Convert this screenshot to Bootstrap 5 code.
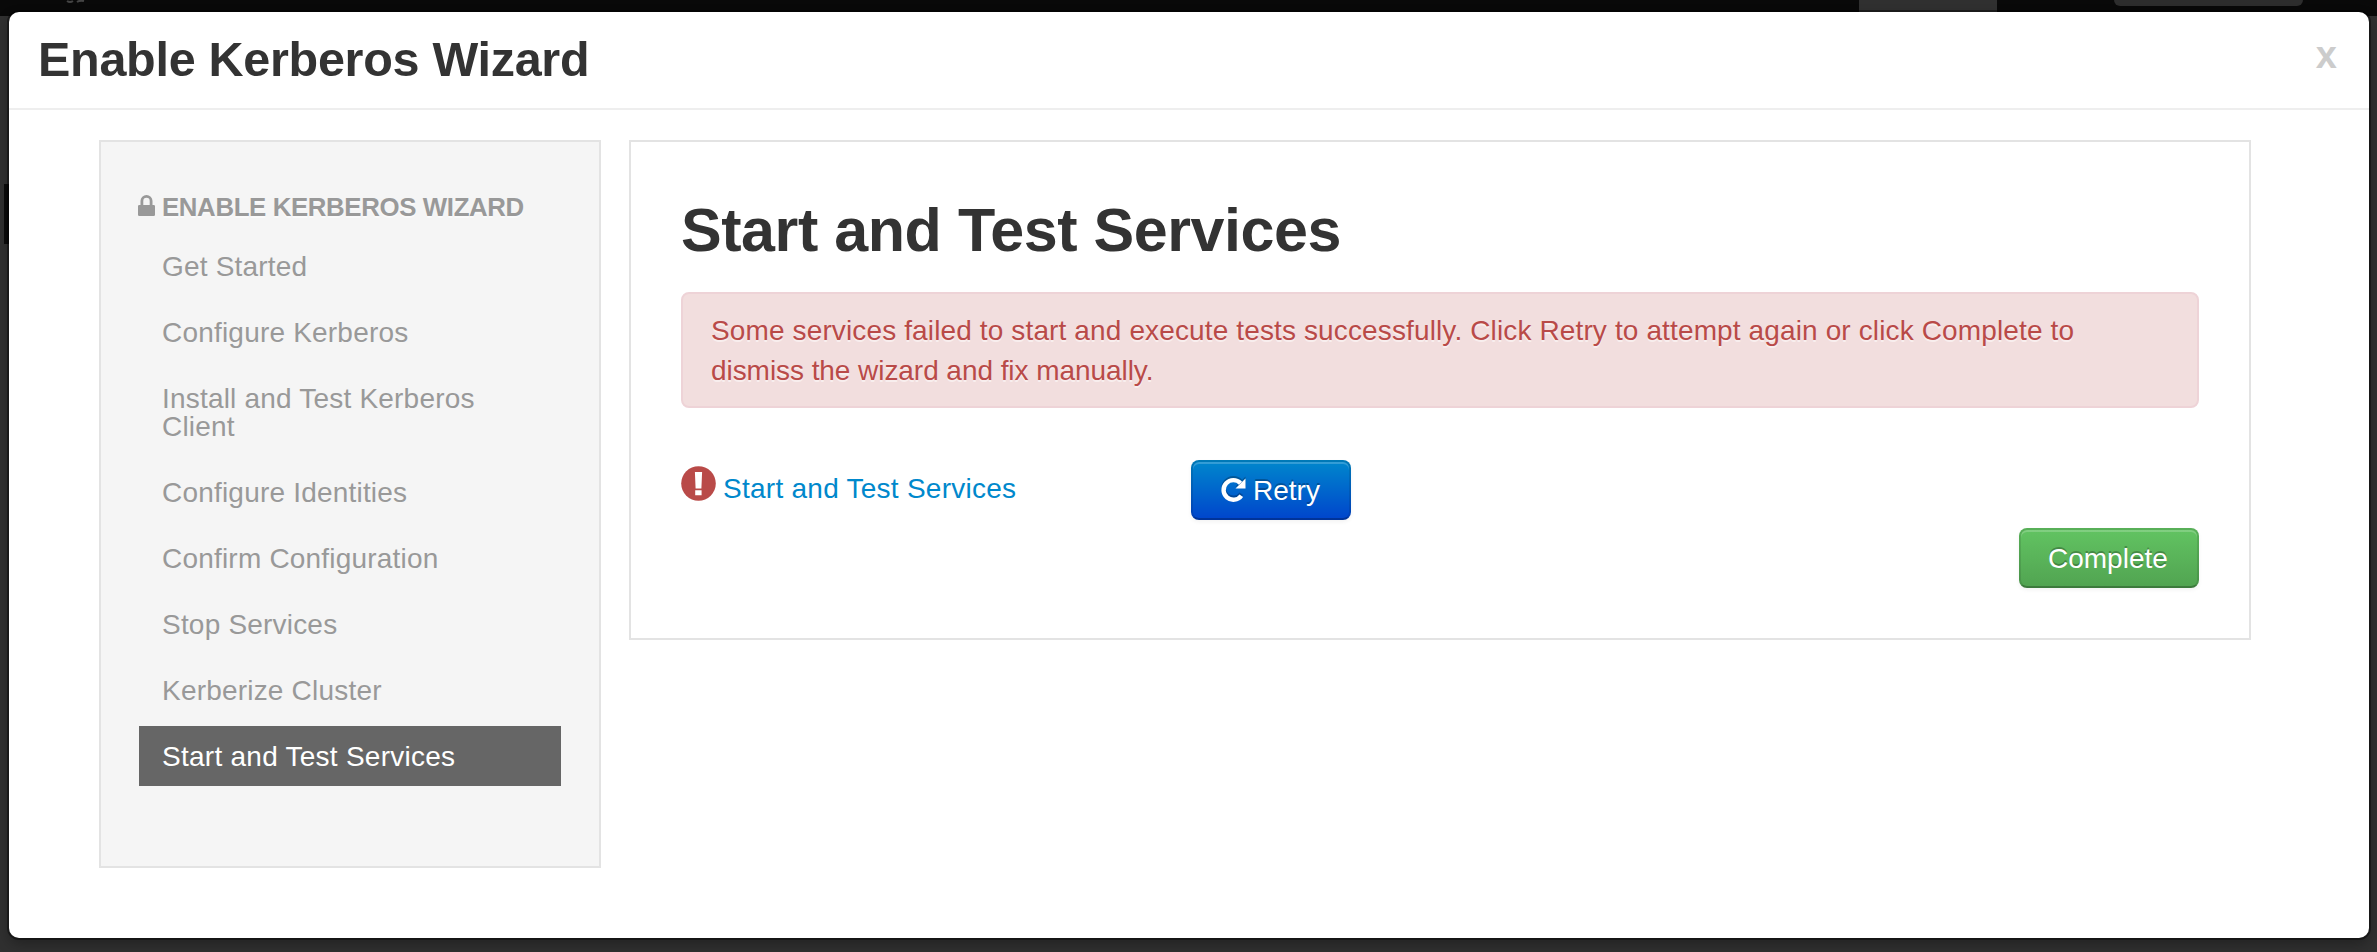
<!DOCTYPE html>
<html lang="en">
<head>
<meta charset="utf-8">
<title>Enable Kerberos Wizard</title>
<link rel="stylesheet" href="https://cdn.jsdelivr.net/npm/bootstrap@5.3.0/dist/css/bootstrap.min.css">
<style>
html,body{height:100%;overflow:hidden}
body{background:#303030;font-family:"Liberation Sans",Arial,sans-serif;font-size:28px;line-height:40px;color:#333}
.topbar{position:absolute;top:0;left:0;right:0;height:16px;background:#090909}
.top-tab{position:absolute;left:1859px;top:0;width:138px;height:12px;background:#303030}
.top-btn{position:absolute;left:2114px;top:0;width:189px;height:6px;background:#2d2d2d;border-radius:0 0 8px 8px}
.top-mark{position:absolute;left:66px;top:0}
.side-mark{position:absolute;left:4px;top:184px;width:8px;height:60px;background:#0b0b0b}
.wizard{position:relative;margin:12px 8px 14px 9px;height:926px;background:#fff;border-radius:10px;box-shadow:0 0 0 2px rgba(0,0,0,.4),0 6px 14px rgba(0,0,0,.3)}
.wizard-head{height:98px;border-bottom:2px solid #eee;padding:17px 32px 0 29px}
.wizard-head h3{font-size:48.500px;line-height:60px;font-weight:700;letter-spacing:-.28px;margin:0;color:#333}
.close-x{font-size:38px;line-height:40px;font-weight:700;color:#ccc;margin-top:6px}
.wizard-body{padding:30px 118px 0 90px;gap:28px}
.steps{width:502px;height:728px;background:#f5f5f5;border:2px solid #e3e3e3;padding:44px 38px;flex:none}
.steps-title{font-size:25.800px;line-height:42px;font-weight:700;letter-spacing:-.36px;color:#999;text-shadow:0 2px 0 rgba(255,255,255,.5);height:50px;white-space:nowrap;gap:6px;margin-left:-1px}
.steps .nav-link{font-size:28px;line-height:28px;letter-spacing:.2px;color:#999;padding:17px 24px 15px 23px;margin-bottom:6px;border-radius:0}
.steps .nav-link.active{background:#666;color:#fff;letter-spacing:.26px}
.panel{height:500px;border:2px solid #e3e3e3;padding:48px 50px 0;min-width:0}
.panel h1{font-size:61px;line-height:80px;font-weight:700;letter-spacing:-.44px;margin:0 0 22px;color:#333}
.fail{height:116px;background:#f2dede;border:2px solid #eed3d7;border-radius:8px;color:#b94a48;padding:17px 28px 15px;margin:0;letter-spacing:.13px;text-shadow:0 2px 0 rgba(255,255,255,.5)}
.fail-end{letter-spacing:-.06px}
.task{margin-top:52px;height:60px}
.task-name{width:510px;color:#08c;letter-spacing:.26px}
.task-text{padding:9px 0 0 7px}
.btn.act{height:60px;padding:9px 27px 7px;font-size:28px;line-height:40px;color:#fff;border:2px solid;border-radius:8px;text-shadow:0 -2px 0 rgba(0,0,0,.25);box-shadow:inset 0 2px 0 rgba(255,255,255,.2),0 2px 4px rgba(0,0,0,.05)}
.retry{width:160px;gap:6px;background:linear-gradient(#08c,#04c) border-box!important;border-color:rgba(0,0,0,.1) rgba(0,0,0,.1) rgba(0,0,0,.25)!important}
.retry svg{margin:-1px 0 0 1px;filter:drop-shadow(0 -2px 0 rgba(0,0,0,.25))}
.done{width:180px;text-align:left!important;background:linear-gradient(#62c462,#51a351) border-box!important;border-color:rgba(0,0,0,.1) rgba(0,0,0,.1) rgba(0,0,0,.25)!important}
</style>
</head>
<body>
<div class="topbar">
  <div class="top-tab"></div><div class="top-btn"></div>
  <svg class="top-mark" width="20" height="4"><path d="M1 1q3 2 6 0M11 2q3-2 7-1" stroke="#444" stroke-width="2" fill="none"/></svg>
</div>
<div class="side-mark"></div>
<div class="overflow-hidden h-100">
<main class="wizard">
  <header class="wizard-head d-flex justify-content-between align-items-start">
    <h3>Enable Kerberos Wizard</h3>
    <span class="close-x" role="button">x</span>
  </header>
  <div class="wizard-body d-flex align-items-start">
    <aside class="steps">
      <div class="steps-title d-flex">
        <svg width="18" height="40" viewBox="0 0 18 40"><path d="M1.200 19H2.500v-4a6 6 0 0 1 12 0v4h1.300a1.200 1.200 0 0 1 1.200 1.200v8.600a1.200 1.200 0 0 1-1.200 1.200H1.200A1.200 1.200 0 0 1 0 28.800v-8.600A1.200 1.200 0 0 1 1.200 19M5.300 19h6.400v-4a3.200 3.200 0 0 0-6.400 0z" fill="#999" fill-rule="evenodd"/></svg>
        <span>ENABLE KERBEROS WIZARD</span>
      </div>
      <nav class="nav flex-column">
        <a class="nav-link">Get Started</a>
        <a class="nav-link">Configure Kerberos</a>
        <a class="nav-link">Install and Test Kerberos Client</a>
        <a class="nav-link">Configure Identities</a>
        <a class="nav-link">Confirm Configuration</a>
        <a class="nav-link">Stop Services</a>
        <a class="nav-link">Kerberize Cluster</a>
        <a class="nav-link active">Start and Test Services</a>
      </nav>
    </aside>
    <section class="panel flex-grow-1">
      <h1>Start and Test Services</h1>
      <div class="alert fail">Some services failed to start and execute tests successfully. Click Retry to attempt again or click Complete to<br><span class="fail-end">dismiss the wizard and fix manually.</span></div>
      <div class="task d-flex">
        <div class="task-name d-flex">
          <svg width="35" height="50" viewBox="0 0 35 50"><circle cx="17.500" cy="23.500" r="17.300" fill="#b94a48"/><path d="M13.900 12h7.200l-.7 16.500h-5.800zM14.200 30.300h6.400v5h-6.400z" fill="#fff"/></svg>
          <span class="task-text">Start and Test Services</span>
        </div>
        <button class="btn act retry d-flex"><svg width="26" height="40" viewBox="0 0 26 40"><path d="M19.500 13.200A9.800 9.800 0 1 0 20.300 25.700" fill="none" stroke="#fff" stroke-width="4.400"/><path d="M24.500 8.500v10H14.500z" fill="#fff"/></svg><span>Retry</span></button>
      </div>
      <div class="d-flex justify-content-end pt-2">
        <button class="btn act done">Complete</button>
      </div>
    </section>
  </div>
</main>
</div>
<script src="https://cdn.jsdelivr.net/npm/bootstrap@5.3.0/dist/js/bootstrap.bundle.min.js"></script>
</body>
</html>
